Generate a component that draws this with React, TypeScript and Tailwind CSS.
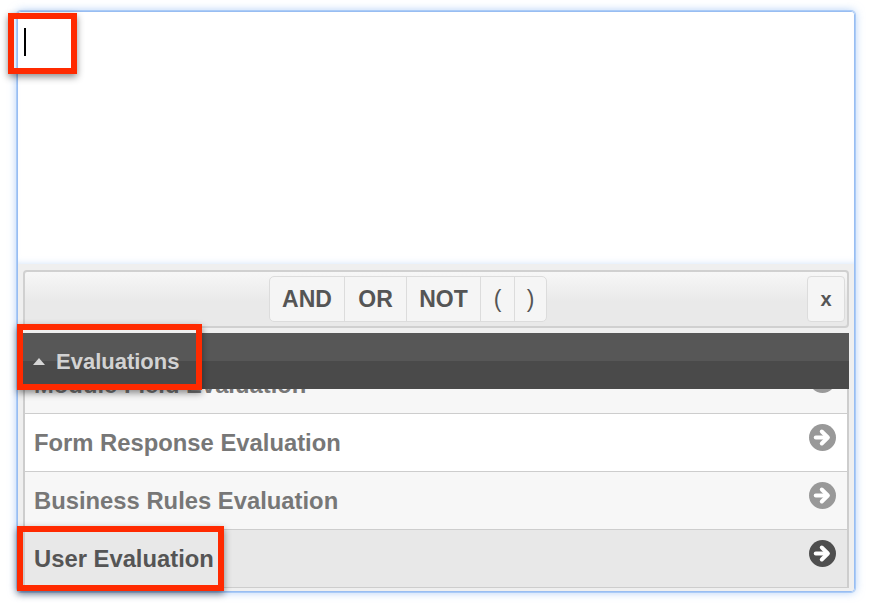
import React from "react";

const font = { fontFamily: '"Liberation Sans", Arial, Helvetica, sans-serif' };

function ArrowCircle({ color }: { color: string }) {
  return (
    <svg width="27" height="27" viewBox="0 0 26 26" className="mb-[10px]">
      <circle cx="13" cy="13" r="13" fill={color} />
      <line x1="6.5" y1="13" x2="17" y2="13" stroke="#fff" strokeWidth="3.8" strokeLinecap="round" />
      <polyline points="12.3,7.2 18.2,13 12.3,18.8" fill="none" stroke="#fff" strokeWidth="3.8" strokeLinecap="round" strokeLinejoin="round" />
    </svg>
  );
}

function Row({ label, bg, color, icon, extra }: { label: string; bg: string; color: string; icon: string; extra?: string }) {
  return (
    <div className={`flex h-[58px] items-center justify-between border-b border-[#cdcdcd] pl-[9px] pr-[11px] ${bg} ${extra ?? ""}`}>
      <span className="text-[23.8px] font-bold" style={{ color }}>{label}</span>
      <ArrowCircle color={icon} />
    </div>
  );
}

export default function App() {
  return (
    <div className="relative h-[610px] w-[874px] overflow-hidden bg-white" style={font}>
      <div className="ml-[17px] mt-[11px] flex h-[581px] w-[838px] flex-col overflow-hidden rounded-[4px] border border-[#98bdf2] shadow-[0_0_0_1px_rgba(160,196,245,0.8),0_0_10px_rgba(110,165,240,0.6)]">
        {/* textarea */}
        <div className="relative h-[252px] shrink-0 bg-white shadow-[inset_0_-5px_7px_-5px_rgba(120,170,235,0.35)]">
          <div className="absolute left-[6px] top-[16px] h-[28px] w-[2px] bg-black" />
        </div>
        {/* bottom section */}
        <div className="flex flex-1 flex-col bg-[#efefef] px-[5px] pt-[6px]">
          {/* toolbar */}
          <div className="flex h-[58px] shrink-0 items-center rounded-[4px] border-2 border-[#d0d0d0] bg-[linear-gradient(#f7f7f7,#e9e9e9_55%,#e9e9e9)]">
            <div className="ml-[244px] flex h-[46px] overflow-hidden rounded-[5px] border border-[#dcdcdc] bg-[#f5f5f5] text-[23px] font-bold text-[#555]">
              <div className="flex w-[75px] items-center justify-center border-r border-[#dcdcdc]">AND</div>
              <div className="flex w-[62px] items-center justify-center border-r border-[#dcdcdc]">OR</div>
              <div className="flex w-[74px] items-center justify-center border-r border-[#dcdcdc]">NOT</div>
              <div className="flex w-[34px] items-center justify-center border-r border-[#dcdcdc] font-normal">(</div>
              <div className="flex w-[31px] items-center justify-center font-normal">)</div>
            </div>
            <div className="ml-auto mr-[2px] flex h-[46px] w-[38px] items-center justify-center rounded-[4px] border border-[#dcdcdc] bg-[#f5f5f5] text-[20px] font-bold text-[#555]">
              x
            </div>
          </div>
          {/* list */}
          <div className="mt-[5px] flex flex-col">
            <div className="flex h-[56px] shrink-0 items-center bg-[linear-gradient(#575757_50%,#4a4a4a_50%)] pl-[10px]">
              <svg width="12" height="7" viewBox="0 0 12 7" className="mr-[11px]">
                <polygon points="6,0 12,7 0,7" fill="#d6d6d6" />
              </svg>
              <span className="text-[22px] font-bold text-[#d2d2d2]">Evaluations</span>
            </div>
            <div className="h-[199px] overflow-hidden border-x-2 border-[#cdcdcd]">
              <Row label="Module Field Evaluation" bg="bg-[#f7f7f7]" color="#777" icon="#999" extra="-mt-[33px]" />
              <Row label="Form Response Evaluation" bg="bg-white" color="#777" icon="#999" />
              <Row label="Business Rules Evaluation" bg="bg-[#f7f7f7]" color="#777" icon="#999" />
              <Row label="User Evaluation" bg="bg-[#e8e8e8]" color="#555" icon="#4f4f4f" />
            </div>
          </div>
        </div>
      </div>

      {/* red highlight boxes */}
      <div className="absolute left-[8px] top-[13px] h-[61px] w-[69px] border-[6px] border-[#ff2a00] shadow-[0_3px_7px_rgba(0,0,0,0.45)]" />
      <div className="absolute left-[17px] top-[324px] h-[66px] w-[185px] border-[6px] border-[#ff2a00] shadow-[0_3px_7px_rgba(0,0,0,0.45)]" />
      <div className="absolute left-[17px] top-[526px] h-[65px] w-[207px] border-[6px] border-[#ff2a00] shadow-[0_3px_7px_rgba(0,0,0,0.45)]" />
    </div>
  );
}
